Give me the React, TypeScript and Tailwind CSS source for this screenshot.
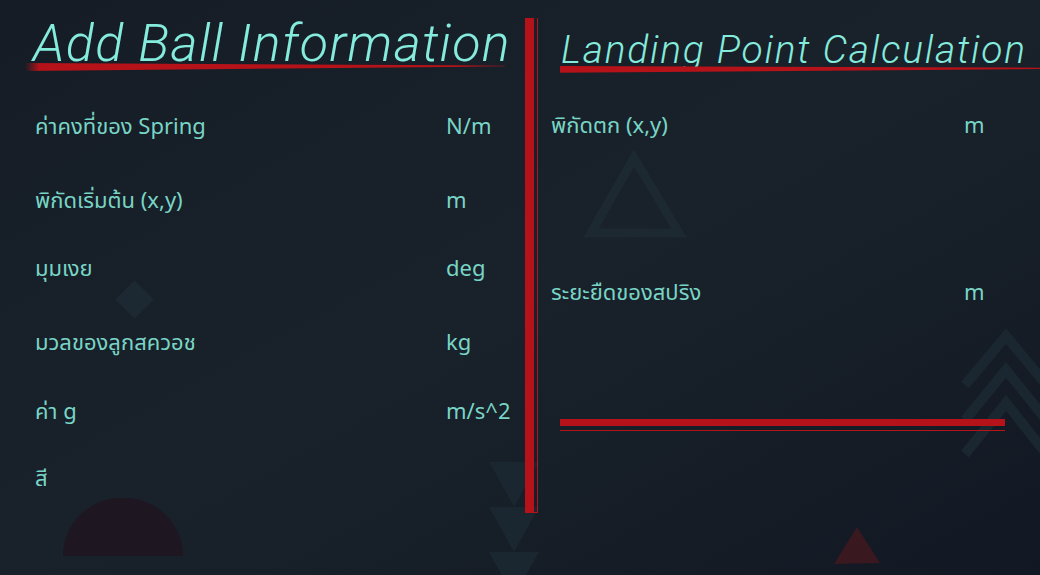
import React from "react";

const leftRows = [
  { label: "ค่าคงที่ของ Spring", unit: "N/m", mt: "mt-[33px]" },
  { label: "พิกัดเริ่มต้น (x,y)", unit: "m", mt: "mt-[34px]" },
  { label: "มุมเงย", unit: "deg", mt: "mt-[28px]" },
  { label: "มวลของลูกสควอช", unit: "kg", mt: "mt-[34px]" },
  { label: "ค่า g", unit: "m/s^2", mt: "mt-[29px]" },
  { label: "สี", unit: "", mt: "mt-[27px]" },
];

const labelFont = { fontFamily: '"Noto Sans Thai", "Noto Sans Thai UI", "Noto Sans", sans-serif' };
const titleFont = { fontFamily: 'Roboto, "Noto Sans", sans-serif' };

function Decorations() {
  return (
    <div aria-hidden="true" className="pointer-events-none absolute inset-0">
      {/* diamond */}
      <div className="absolute left-[121px] top-[286px] h-[27px] w-[27px] rotate-45 bg-[#1c2932]" />
      {/* half circle */}
      <div className="absolute left-[63px] top-[498px] h-[58px] w-[120px] rounded-t-full bg-[#1e1620]" />
      {/* stacked triangles */}
      <svg className="absolute left-[489px] top-[462px]" width="50" height="113" viewBox="0 0 50 113">
        <polygon points="0,0 50,0 25,45" fill="#1b2730" />
        <polygon points="0,45 50,45 25,90" fill="#1b2730" />
        <polygon points="0,90 50,90 25,135" fill="#1b2730" />
      </svg>
      {/* outline triangle */}
      <svg className="absolute left-[583px] top-[150px]" width="104" height="90" viewBox="0 0 104 90">
        <polygon points="51,8 96,83 8,83" fill="none" stroke="#1d2931" strokeWidth="9" />
      </svg>
      {/* chevrons */}
      <svg className="absolute left-[958px] top-[328px]" width="82" height="140" viewBox="0 0 82 140">
        <polyline points="7,57 48,8 95,65" fill="none" stroke="#1b2730" strokeWidth="10" />
        <polyline points="7,92 48,42 95,100" fill="none" stroke="#1b2730" strokeWidth="10" />
        <polyline points="7,126 48,75 95,134" fill="none" stroke="#1b2730" strokeWidth="10" />
      </svg>
      {/* red triangle */}
      <svg className="absolute left-[834px] top-[527px]" width="46" height="37" viewBox="0 0 46 37">
        <polygon points="23,0 46,36 0,37" fill="#391820" />
      </svg>
    </div>
  );
}

export default function App() {
  return (
    <div className="relative flex h-[575px] w-[1040px] overflow-hidden bg-linear-to-br from-[#151c25] via-[#19222b] to-[#121823]">
      <Decorations />

      {/* Left panel */}
      <div className="relative w-[525px] shrink-0 pl-[33px] pt-[14px]">
        <div className="relative">
          <h1
            className="text-[52px] font-light italic leading-[60px] tracking-[0.025em] text-[#84ebdd]"
            style={titleFont}
          >
            Add Ball Information
          </h1>
          <svg className="absolute left-[-8px] top-[49px]" width="480" height="10" viewBox="0 0 480 10">
            <defs>
              <linearGradient id="lfade" x1="0" x2="1" y1="0" y2="0">
                <stop offset="0" stopColor="#b51219" stopOpacity="0" />
                <stop offset="0.03" stopColor="#b51219" />
                <stop offset="0.9" stopColor="#b51219" />
                <stop offset="1" stopColor="#b51219" stopOpacity="0.4" />
              </linearGradient>
            </defs>
            <polygon points="0,0 480,2.5 480,3.5 0,8" fill="url(#lfade)" />
          </svg>
        </div>

        <div className="pl-[2px]" style={labelFont}>
          {leftRows.map((r) => (
            <div key={r.label} className={`${r.mt} grid h-[40px] grid-cols-[411px_auto] items-center text-[22px] text-[#78d5c6]`}>
              <span>{r.label}</span>
              <span>{r.unit}</span>
            </div>
          ))}
        </div>
      </div>

      {/* Divider */}
      <div className="relative shrink-0 pt-[18px]">
        <div className="flex h-[495px] w-[13px] border-r border-b border-[#b51219]">
          <div className="h-full w-[9px] bg-[#b51219]" />
        </div>
      </div>

      {/* Right panel */}
      <div className="relative flex-1 pl-[13px] pt-[27px]">
        <div className="relative ml-[10px]">
          <h2
            className="text-[39px] font-light italic leading-[46px] tracking-[0.045em] text-[#84ebdd]"
            style={titleFont}
          >
            Landing Point Calculation
          </h2>
          <svg className="absolute left-[-1px] top-[39px]" width="480" height="8" viewBox="0 0 480 8">
            <polygon points="0,0 480,1.7 480,3 0,6.7" fill="#b51219" />
          </svg>
        </div>

        <div style={labelFont}>
          <div className="mt-[33px] grid h-[40px] grid-cols-[413px_auto] items-center text-[22px] text-[#78d5c6]">
            <span>พิกัดตก (x,y)</span>
            <span>m</span>
          </div>
          <div className="mt-[127px] grid h-[40px] grid-cols-[413px_auto] items-center text-[22px] text-[#78d5c6]">
            <span>ระยะยืดของสปริง</span>
            <span>m</span>
          </div>
        </div>

        <div className="ml-[9px] mt-[106px] w-[445px]">
          <div className="h-[7px] bg-[#b51219]" />
          <div className="mt-[4px] h-px bg-[#b51219]" />
        </div>
      </div>
    </div>
  );
}
